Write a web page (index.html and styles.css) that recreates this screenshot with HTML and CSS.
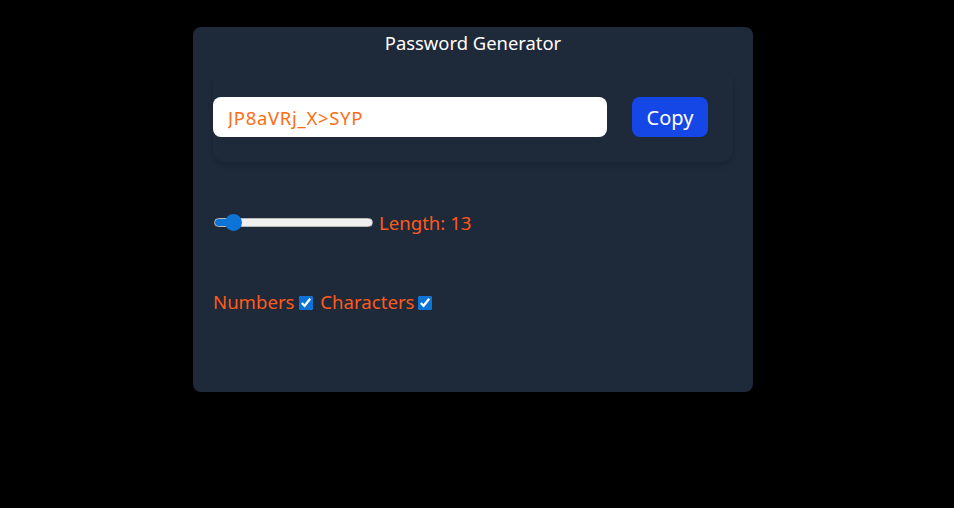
FILE: index.html
```html
<!DOCTYPE html>
<html>

<head>
	<title>Password Generator</title>
	<link rel="stylesheet" href="styles.css">
</head>

<body>
	<div class="card">
		<h1>Password Generator</h1>
		<div class="output-box">
			<input type="text" id="password" value="JP8aVRj_X>SYP" readonly>
			<button id="copy-btn">Copy</button>
		</div>
		<div class="row">
			<input type="range" id="length" min="6" max="100" value="13">
			<label for="length" id="length-label">Length: 13</label>
		</div>
		<div class="row options">
			<label for="numbers">Numbers</label><input type="checkbox" id="numbers" checked>
			<label for="chars">Characters</label><input type="checkbox" id="chars" checked>
		</div>
	</div>
</body>

</html>
```

FILE: styles.css
```css
body {
	font-family: "Noto Sans", "Open Sans", sans-serif;
	background-color: #000;
	margin: 0;
	padding: 27px 8px 0 0;
}

.card {
	width: 560px;
	height: 365px;
	box-sizing: border-box;
	margin: 0 auto;
	padding: 2px 20px 0;
	background-color: #1e2939;
	border-radius: 8px;
}

h1 {
	margin: 0 0 13px;
	font-size: 18.4px;
	font-weight: 400;
	line-height: 28px;
	text-align: center;
	color: #fff;
}

.output-box {
	display: flex;
	align-items: center;
	padding: 27px 0 25px;
	border-radius: 12px;
	box-shadow: 0 4px 6px -1px rgba(0, 0, 0, 0.1), 0 2px 4px -2px rgba(0, 0, 0, 0.1);
}

#password {
	width: 394px;
	height: 40px;
	box-sizing: border-box;
	padding: 0 15px;
	border: none;
	border-radius: 8px;
	background: #fff;
	color: #ff6d12;
	font-family: inherit;
	font-size: 18.5px;
	letter-spacing: 0.7px;
	outline: none;
}

#copy-btn {
	height: 40px;
	width: 76px;
	margin-left: 25px;
	border: none;
	border-radius: 8px;
	background-color: #1447e6;
	color: #fff;
	font-family: inherit;
	font-size: 20px;
}

.row {
	display: flex;
	align-items: center;
	height: 28px;
	margin-top: 46px;
	font-size: 18.6px;
	color: #fd5a1c;
}

#length {
	-webkit-appearance: none;
	appearance: none;
	box-sizing: border-box;
	width: 159px;
	height: 9px;
	margin: 0 6px 0 1px;
	border: 1px solid #b8b8b8;
	border-radius: 5px;
	background: linear-gradient(to right, #0b74d6 0, #0b74d6 20px, #efefef 20px);
}

#length::-webkit-slider-thumb {
	-webkit-appearance: none;
	width: 17px;
	height: 17px;
	border-radius: 50%;
	background: #0b74d6;
	border: none;
}

.options {
	display: block;
	line-height: 28px;
	margin-top: 52px;
}

.options input {
	width: 14px;
	height: 14px;
	margin: 0 3px 0 4px;
	vertical-align: -1px;
	accent-color: #0b74d6;
}
```
